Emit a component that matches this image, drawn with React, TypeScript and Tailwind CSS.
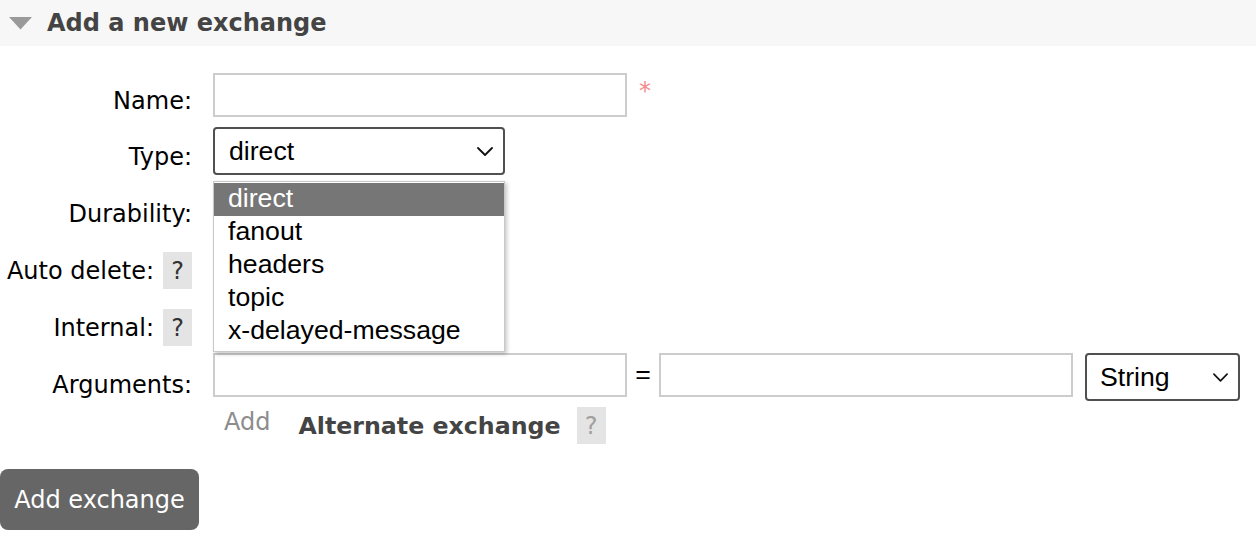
import React from "react";

const V = { fontFamily: '"DejaVu Sans", Verdana, sans-serif' };
const A = { fontFamily: '"Liberation Sans", Arial, sans-serif' };

function Chevron({ w = 16, h = 9 }: { w?: number; h?: number }) {
  return (
    <svg width={w} height={h} viewBox="0 0 16 9" fill="none">
      <path d="M1 1 L8 8 L15 1" stroke="#111" strokeWidth="1.8" strokeLinecap="round" strokeLinejoin="round" />
    </svg>
  );
}

function Help({ light = false }: { light?: boolean }) {
  return (
    <span
      className={`flex h-[37px] w-[29px] items-center justify-center bg-[#e4e4e4] text-[24px] ${light ? "text-[#a0a0a0]" : "text-[#333]"}`}
      style={V}
    >
      ?
    </span>
  );
}

function Label({ text, help = false }: { text: string; help?: boolean }) {
  return (
    <div className="mt-[15px] flex h-[37px] w-[193px] shrink-0 items-center justify-end gap-[9px] pr-[1px]">
      <span className="text-[24px] leading-[28px] text-black" style={V}>
        {text}
      </span>
      {help && <Help />}
    </div>
  );
}

export default function App() {
  const options = ["direct", "fanout", "headers", "topic", "x-delayed-message"];
  return (
    <div className="relative h-[537px] w-[1256px] overflow-hidden bg-white">
      <div className="flex h-[46px] items-center bg-[#f7f7f7]">
        <svg className="ml-[9px]" width="23" height="13" viewBox="0 0 23 13">
          <polygon points="0,0 23,0 11.5,12.5" fill="#9a9a9a" />
        </svg>
        <h2 className="ml-[15px] text-[24px] font-bold text-[#444]" style={V}>
          Add a new exchange
        </h2>
      </div>

      <div className="pt-[21px]">
        {/* Name */}
        <div className="flex h-[56px]">
          <Label text="Name:" />
          <div className="ml-[20px] flex items-start">
            <div className="mt-[6px] h-[44px] w-[414px] border-2 border-[#cccccc] bg-white" />
            <span className="ml-[12px] mt-[10px] text-[24px] leading-[28px] text-[#f48a8a]" style={V}>
              *
            </span>
          </div>
        </div>
        {/* Type */}
        <div className="flex h-[57px]">
          <Label text="Type:" />
          <div className="ml-[20px]">
            <div className="mt-[4px] flex h-[48px] w-[292px] items-center justify-between rounded-[4px] border-2 border-[#505050] pl-[14px] pr-[10px]">
              <span className="text-[26.67px] text-black" style={A}>
                direct
              </span>
              <Chevron />
            </div>
          </div>
        </div>
        {/* Durability */}
        <div className="flex h-[57px]">
          <Label text="Durability:" />
        </div>
        {/* Auto delete */}
        <div className="flex h-[57px]">
          <Label text="Auto delete:" help />
        </div>
        {/* Internal */}
        <div className="flex h-[57px]">
          <Label text="Internal:" help />
        </div>
        {/* Arguments */}
        <div className="flex h-[56px]">
          <Label text="Arguments:" />
          <div className="ml-[20px] flex items-start">
            <div className="mt-[2px] h-[44px] w-[414px] border-2 border-[#cccccc]" />
            <span className="mt-[8px] w-[32px] text-center text-[26.67px] leading-[30px] text-black" style={A}>
              =
            </span>
            <div className="mt-[2px] h-[44px] w-[414px] border-2 border-[#cccccc]" />
            <div className="ml-[12px] mt-[2px] flex h-[48px] w-[155px] items-center justify-between rounded-[4px] border-2 border-[#505050] pl-[13px] pr-[10px]">
              <span className="text-[26.67px] text-black" style={A}>
                String
              </span>
              <Chevron w={15} h={9} />
            </div>
          </div>
        </div>
        {/* Add / Alternate exchange */}
        <div className="ml-[213px] flex h-[37px] items-center">
          <span className="mb-[8px] pl-[11px] text-[24px] leading-[28px] text-[#8c8c8c]" style={V}>
            Add
          </span>
          <span className="ml-[28px] text-[23.7px] font-bold leading-[28px] text-[#444]" style={V}>
            Alternate exchange
          </span>
          <span className="ml-[16px]">
            <Help light />
          </span>
        </div>
        <div className="mt-[25px]">
          <button
            className="flex h-[61px] w-[199px] items-center justify-center rounded-[8px] bg-[#666666] text-[24px] text-white"
            style={V}
          >
            Add exchange
          </button>
        </div>
      </div>

      {/* open dropdown list */}
      <div className="absolute left-[213px] top-[181px] h-[171px] w-[292px] border border-[#c8c8c8] bg-white pt-[1px] shadow-[2px_2px_4px_rgba(0,0,0,0.22)]">
        {options.map((o, i) => (
          <div
            key={o}
            className={`flex h-[33px] items-center pb-[3px] pl-[14px] text-[26.67px] ${i === 0 ? "bg-[#767676] text-white" : "text-black"}`}
            style={A}
          >
            {o}
          </div>
        ))}
      </div>
    </div>
  );
}
